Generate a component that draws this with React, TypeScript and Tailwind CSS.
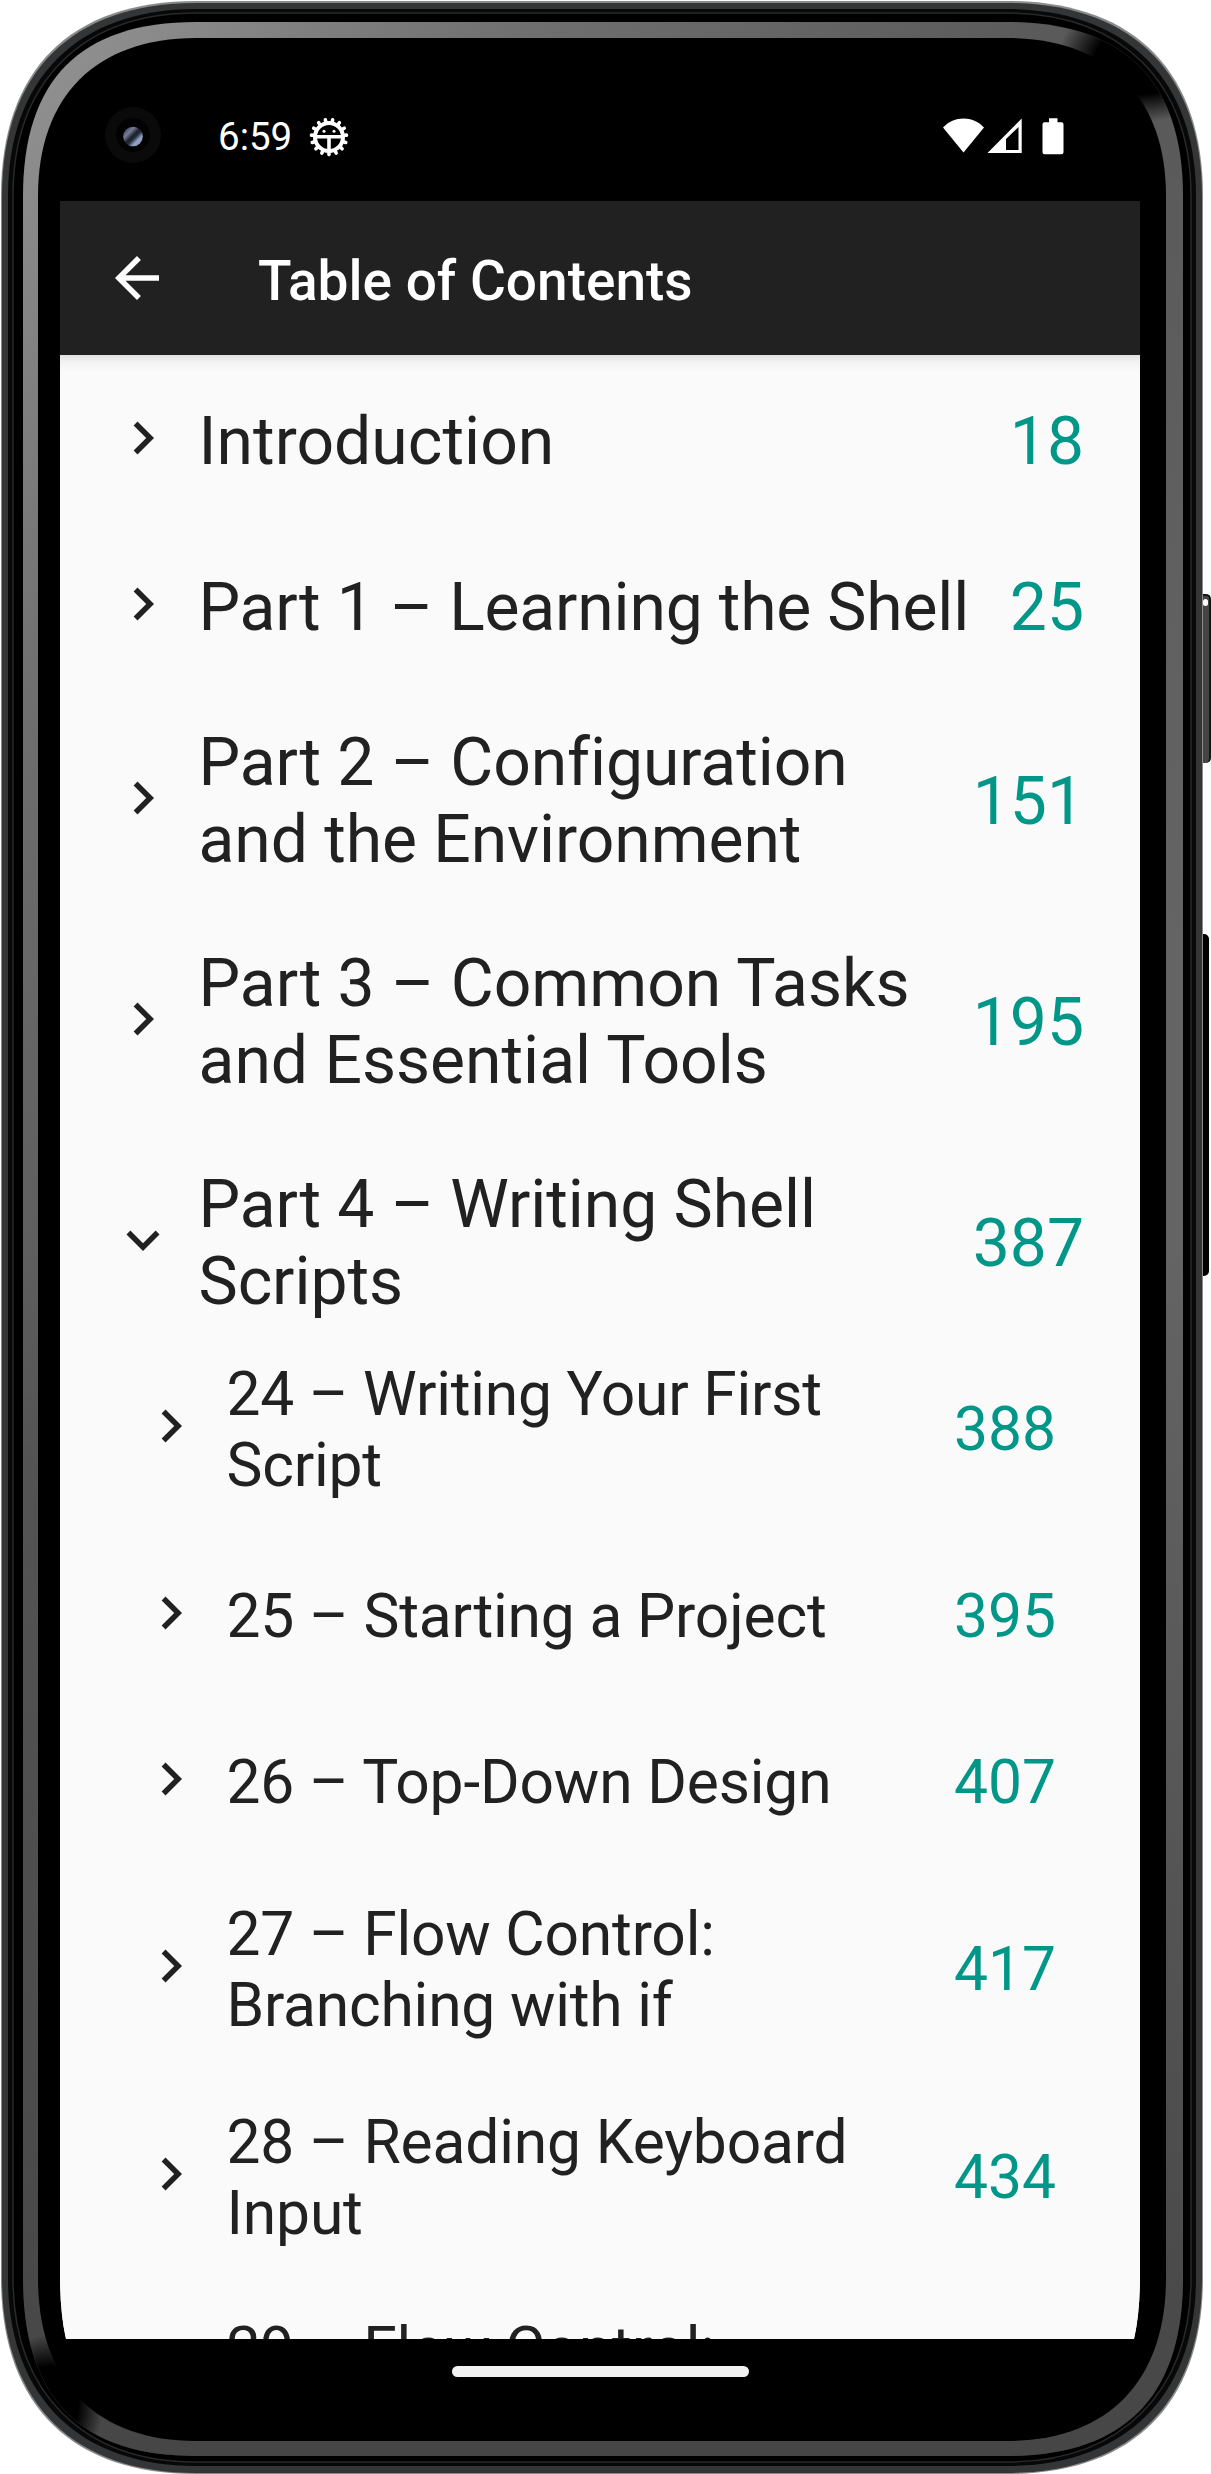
import React from "react";

type Entry = { lines: string[]; page: string; open?: boolean; sub?: boolean; h: string; track?: string };

const entries: Entry[] = [
  { lines: ["Introduction"], page: "18", h: "h-[166px]", track: "tracking-[0.05px]" },
  { lines: ["Part 1 – Learning the Shell"], page: "25", h: "h-[166px]", track: "tracking-[-0.18px]" },
  { lines: ["Part 2 – Configuration", "and the Environment"], page: "151", h: "h-[221px]", track: "tracking-[-0.06px]" },
  { lines: ["Part 3 – Common Tasks", "and Essential Tools"], page: "195", h: "h-[221px]" },
  { lines: ["Part 4 – Writing Shell", "Scripts"], page: "387", open: true, h: "h-[221px] -mb-[28px]", track: "tracking-[-0.06px]" },
  { lines: ["24 – Writing Your First", "Script"], page: "388", sub: true, h: "h-[208px]", track: "tracking-[-0.22px]" },
  { lines: ["25 – Starting a Project"], page: "395", sub: true, h: "h-[166px]", track: "tracking-[-0.16px]" },
  { lines: ["26 – Top-Down Design"], page: "407", sub: true, h: "h-[166px]", track: "tracking-[-0.16px]" },
  { lines: ["27 – Flow Control:", "Branching with if"], page: "417", sub: true, h: "h-[208px]", track: "tracking-[-0.2px]" },
  { lines: ["28 – Reading Keyboard", "Input"], page: "434", sub: true, h: "h-[208px] -mb-px", track: "tracking-[-0.15px]" },
  { lines: ["29 – Flow Control:", "\u00a0"], page: "", sub: true, h: "h-[208px]", track: "tracking-[-0.2px]" },
];

function Row({ e }: { e: Entry }) {
  const size = e.sub ? "text-[60.5px] leading-[71px]" : "text-[66px] leading-[77px]";
  return (
    <li className={`flex shrink-0 items-center ${e.h} ${e.sub ? "pl-[78px] pr-[84px]" : "pl-[50px] pr-[56px]"}`}>
      <svg viewBox="0 0 24 24" className="mt-[-6px] h-[66px] w-[66px] shrink-0" fill="#212121">
        {e.open ? (
          <path d="M7.41 8.59 12 13.17l4.59-4.58L18 10l-6 6-6-6z" />
        ) : (
          <path d="M8.59 16.59 13.17 12 8.59 7.41 10 6l6 6-6 6z" />
        )}
      </svg>
      <div className={`ml-[22.5px] mt-px whitespace-nowrap text-[#212121] ${size} ${e.track ?? ""}`}>
        {e.lines.map((l) => (
          <div key={l}>{l}</div>
        ))}
      </div>
      <div className={`ml-auto mt-px text-[#009688] ${size}`}>{e.page}</div>
    </li>
  );
}

const teeth = Array.from({ length: 15 }, (_, i) => i * 24 + 12);

function StatusBar() {
  return (
    <div className="relative flex h-[201px] items-center pl-[218px] pr-[147px] pt-[72px]">
      <svg viewBox="0 0 56 56" className="absolute left-[105px] top-[107px] h-[56px] w-[56px]">
        <defs>
          <linearGradient id="lens" x1="0" y1="0" x2="1" y2="1">
            <stop offset="0" stopColor="#22242f" />
            <stop offset="0.3" stopColor="#767d98" />
            <stop offset="0.48" stopColor="#1c202a" />
            <stop offset="0.58" stopColor="#27303f" />
            <stop offset="0.72" stopColor="#91a2c4" />
            <stop offset="1" stopColor="#8296bd" />
          </linearGradient>
        </defs>
        <circle cx="28" cy="28" r="28" fill="#0a0a0a" />
        <circle cx="28" cy="28" r="17" fill="#020203" />
        <circle cx="28" cy="29.5" r="9.8" fill="url(#lens)" />
      </svg>
      <span className="text-[38.5px] leading-[45px] text-white">6:59</span>
      <svg viewBox="0 0 40 40" className="ml-[17px] h-[40px] w-[40px]">
        <g stroke="#fff" strokeWidth="3.6" strokeLinecap="round">
          {teeth.map((a) => (
            <path key={a} d="M20 4v-1.600" transform={`rotate(${a} 20 20)`} />
          ))}
        </g>
        <circle cx="20" cy="20" r="14" fill="none" stroke="#fff" strokeWidth="4" />
        <path d="M7 19.8h26M20 20v15" stroke="#fff" strokeWidth="3.6" />
        <circle cx="15" cy="14.3" r="1.5" fill="#fff" />
        <circle cx="25" cy="14.3" r="1.5" fill="#fff" />
      </svg>
      <svg viewBox="0 0 122 38" className="ml-auto mt-[-2px] h-[38px] w-[122px]" fill="#fff">
        <path d="M1 10.5C12-1.5 31-1.5 42 10.5L21.5 35.5z" />
        <path fillRule="evenodd" d="M45.5 36 79.7 1.5V36zM64 33h12.5V10L64 22z" />
        <path d="M107 1.2h8.5v4h4q2 0 2 2v28q0 2-2 2h-17q-2 0-2-2v-28q0-2 2-2h4.500z" />
      </svg>
    </div>
  );
}

const BEZEL =
  "M23 196C23 80 80 22 196 22H1007C1123 22 1183 80 1183 196V2278C1183 2398 1123 2456 1007 2456H196C80 2456 23 2398 23 2278Z";

function PhoneFrame() {
  return (
    <svg viewBox="0 0 1211 2474" className="absolute inset-0 h-full w-full">
      <defs>
        <linearGradient id="bezel" gradientUnits="userSpaceOnUse" x1="0" y1="0" x2="1211" y2="900">
          <stop offset="0" stopColor="#979797" />
          <stop offset="0.3" stopColor="#6e6e6e" />
          <stop offset="0.6" stopColor="#585858" />
          <stop offset="1" stopColor="#646464" />
        </linearGradient>
        <linearGradient id="shade" x1="0" y1="0" x2="0" y2="1">
          <stop offset="0.5" stopColor="#000" stopOpacity="0" />
          <stop offset="1" stopColor="#000" stopOpacity="0.3" />
        </linearGradient>
        <radialGradient id="dark">
          <stop offset="0.55" stopColor="#000" />
          <stop offset="1" stopColor="#000" stopOpacity="0" />
        </radialGradient>
        <clipPath id="bezelClip">
          <path d={BEZEL} />
        </clipPath>
      </defs>
      <path d="M1 196C1 70 70 1 196 1H1007C1133 1 1203 70 1203 196V2278C1203 2404 1133 2474 1007 2474H196C70 2474 1 2404 1 2278Z" fill="#8a8a88" />
      <path d="M2 196C2 72 72 3 196 3H1007C1131 3 1202 72 1202 196V2278C1202 2402 1131 2473 1007 2473H196C72 2473 2 2402 2 2278Z" fill="#333536" />
      <path d="M8 196C8 78 78 9 196 9H1007C1125 9 1196 78 1196 196V2278C1196 2396 1125 2466 1007 2466H196C78 2466 8 2396 8 2278Z" fill="#080808" />
      <path d="M13 196C13 82 82 13 196 13H1007C1121 13 1191 82 1191 196V2278C1191 2392 1121 2462 1007 2462H196C82 2462 13 2392 13 2278Z" fill="#000" stroke="#292929" strokeWidth="1.5" />
      <path d={BEZEL} fill="url(#bezel)" />
      <path d={BEZEL} fill="url(#shade)" />
      <g clipPath="url(#bezelClip)">
        <ellipse cx="1142" cy="60" rx="85" ry="62" fill="url(#dark)" />
        <ellipse cx="48" cy="2405" rx="55" ry="70" fill="url(#dark)" />
      </g>
      <path d="M38 196C38 96 96 38 196 38H1007C1107 38 1166 96 1166 196V2278C1166 2382 1107 2441 1007 2441H196C96 2441 38 2382 38 2278Z" fill="#000" />
    </svg>
  );
}

export default function App() {
  return (
    <div className="relative h-[2474px] w-[1211px] overflow-hidden bg-white font-[Roboto,sans-serif]">
      <div className="absolute left-[1199px] top-[594px] h-[169px] w-[12px] rounded-r-[5px] border-r-2 border-t-2 border-[#151515] bg-[#454545]" />
      <div className="absolute left-[1203px] top-[599px] h-[7px] w-[5px] rounded-full bg-white" />
      <div className="absolute left-[1199px] top-[934px] h-[342px] w-[10px] rounded-r-[5px] bg-black" />
      <PhoneFrame />
      <div className="relative flex h-full flex-col">
        <StatusBar />
        <div className="mx-[60px] flex w-[1080px] flex-col">
          <header className="relative z-10 flex h-[154px] shrink-0 items-center bg-[#212121] pl-[44px]">
            <svg viewBox="0 0 24 24" className="h-[66px] w-[66px]" fill="#fff">
              <path d="M20 11H7.830l5.590-5.590L12 4l-8 8 8 8 1.410-1.410L7.830 13H20z" />
            </svg>
            <h1 className="ml-[88px] mt-[6px] text-[55px] font-medium leading-[64px] text-white">Table of Contents</h1>
          </header>
          <ul className="flex h-[1984px] flex-col overflow-hidden bg-[#fafafa] bg-[linear-gradient(#e2e2e2,#f2f2f2_7px,#fafafa_16px)] pt-[3px] [clip-path:path('M0_0H1080V1919Q1080_1958_1074_1984H6Q0_1958_0_1919Z')]">
            {entries.map((e) => (
              <Row key={e.lines[0]} e={e} />
            ))}
          </ul>
        </div>
        <div className="mx-auto mt-[27px] h-[11px] w-[297px] -translate-x-[5px] rounded-full bg-[#f2f2f2]" />
      </div>
    </div>
  );
}
